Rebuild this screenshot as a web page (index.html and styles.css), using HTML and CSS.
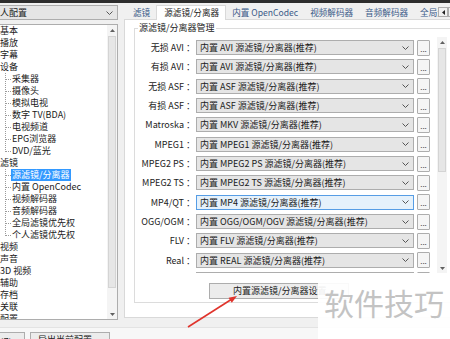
FILE: index.html
```html
<!DOCTYPE html>
<html lang="zh-CN">
<head>
    <meta charset="UTF-8">
    <meta name="viewport" content="width=device-width, initial-scale=1.0">
    <title>参数选项 - 源滤镜/分离器</title>
    <link rel="stylesheet" href="styles.css">
</head>
<body>
    <div class="window">
        <div class="topbar"></div>

        <div class="main">
            <div class="side">
                <div class="combo side-combo">
                    <span class="combo-text">个人配置</span>
                    <svg width="7" height="4" viewBox="0 0 7 4"><path d="M0.5 0.5 L3.5 3.5 L6.5 0.5" fill="none" stroke="#555" stroke-width="1"/></svg>
                </div>
                <div class="tree">
                    <div class="tree-list">
                        <div class="node">基本</div>
                        <div class="node">播放</div>
                        <div class="node">字幕</div>
                        <div class="node">设备</div>
                        <div class="kids">
                            <div class="kid">采集器</div>
                            <div class="kid">摄像头</div>
                            <div class="kid">模拟电视</div>
                            <div class="kid">数字 TV(BDA)</div>
                            <div class="kid">电视频道</div>
                            <div class="kid">EPG浏览器</div>
                            <div class="kid last">DVD/蓝光</div>
                        </div>
                        <div class="node">滤镜</div>
                        <div class="kids">
                            <div class="kid"><span class="sel">源滤镜/分离器</span></div>
                            <div class="kid">内置 OpenCodec</div>
                            <div class="kid">视频解码器</div>
                            <div class="kid">音频解码器</div>
                            <div class="kid">全局滤镜优先权</div>
                            <div class="kid last">个人滤镜优先权</div>
                        </div>
                        <div class="node">视频</div>
                        <div class="node">声音</div>
                        <div class="node">3D 视频</div>
                        <div class="node">辅助</div>
                        <div class="node">存档</div>
                        <div class="node">关联</div>
                        <div class="node">配置</div>
                    </div>
                    <div class="vbar">
                        <div class="vbar-btn"><svg width="5" height="3" viewBox="0 0 5 3"><path d="M0 3 L2.5 0 L5 3Z" fill="#606060"/></svg></div>
                        <div class="vbar-thumb"></div>
                        <div class="vbar-space"></div>
                        <div class="vbar-btn"><svg width="5" height="3" viewBox="0 0 5 3"><path d="M0 0 L2.5 3 L5 0Z" fill="#606060"/></svg></div>
                    </div>
                </div>
            </div>

            <div class="prefs">
                <div class="tabbar">
                    <div class="tabs">
                        <div class="tab">滤镜</div>
                        <div class="tab active">源滤镜/分离器</div>
                        <div class="tab">内置 OpenCodec</div>
                        <div class="tab">视频解码器</div>
                        <div class="tab">音频解码器</div>
                        <div class="tab">全局滤镜优先权</div>
                    </div>
                    <div class="tab-arrows">
                        <div class="tab-arrow"><svg width="3" height="5" viewBox="0 0 3 5"><path d="M3 0 L0 2.5 L3 5Z" fill="#222"/></svg></div>
                        <div class="tab-arrow"><svg width="3" height="5" viewBox="0 0 3 5"><path d="M0 0 L3 2.5 L0 5Z" fill="#222"/></svg></div>
                    </div>
                </div>

                <div class="pane">
                    <fieldset class="group">
                        <legend>源滤镜/分离器管理</legend>
                        <div class="scroller">
                            <div class="rows">
                                <div class="row"><span class="row-label">无损 AVI ：</span><div class="combo"><span class="combo-text">内置 AVI 源滤镜/分离器(推荐)</span><svg width="7" height="4" viewBox="0 0 7 4"><path d="M0.5 0.5 L3.5 3.5 L6.5 0.5" fill="none" stroke="#555" stroke-width="1"/></svg></div><div class="dots">...</div></div>
                                <div class="row"><span class="row-label">有损 AVI ：</span><div class="combo"><span class="combo-text">内置 AVI 源滤镜/分离器(推荐)</span><svg width="7" height="4" viewBox="0 0 7 4"><path d="M0.5 0.5 L3.5 3.5 L6.5 0.5" fill="none" stroke="#555" stroke-width="1"/></svg></div><div class="dots">...</div></div>
                                <div class="row"><span class="row-label">无损 ASF ：</span><div class="combo"><span class="combo-text">内置 ASF 源滤镜/分离器(推荐)</span><svg width="7" height="4" viewBox="0 0 7 4"><path d="M0.5 0.5 L3.5 3.5 L6.5 0.5" fill="none" stroke="#555" stroke-width="1"/></svg></div><div class="dots">...</div></div>
                                <div class="row"><span class="row-label">有损 ASF ：</span><div class="combo"><span class="combo-text">内置 ASF 源滤镜/分离器(推荐)</span><svg width="7" height="4" viewBox="0 0 7 4"><path d="M0.5 0.5 L3.5 3.5 L6.5 0.5" fill="none" stroke="#555" stroke-width="1"/></svg></div><div class="dots">...</div></div>
                                <div class="row"><span class="row-label">Matroska ：</span><div class="combo"><span class="combo-text">内置 MKV 源滤镜/分离器(推荐)</span><svg width="7" height="4" viewBox="0 0 7 4"><path d="M0.5 0.5 L3.5 3.5 L6.5 0.5" fill="none" stroke="#555" stroke-width="1"/></svg></div><div class="dots">...</div></div>
                                <div class="row"><span class="row-label">MPEG1 ：</span><div class="combo"><span class="combo-text">内置 MPEG1 源滤镜/分离器(推荐)</span><svg width="7" height="4" viewBox="0 0 7 4"><path d="M0.5 0.5 L3.5 3.5 L6.5 0.5" fill="none" stroke="#555" stroke-width="1"/></svg></div><div class="dots">...</div></div>
                                <div class="row"><span class="row-label">MPEG2 PS ：</span><div class="combo"><span class="combo-text">内置 MPEG2 PS 源滤镜/分离器(推荐)</span><svg width="7" height="4" viewBox="0 0 7 4"><path d="M0.5 0.5 L3.5 3.5 L6.5 0.5" fill="none" stroke="#555" stroke-width="1"/></svg></div><div class="dots">...</div></div>
                                <div class="row"><span class="row-label">MPEG2 TS ：</span><div class="combo"><span class="combo-text">内置 MPEG2 TS 源滤镜/分离器(推荐)</span><svg width="7" height="4" viewBox="0 0 7 4"><path d="M0.5 0.5 L3.5 3.5 L6.5 0.5" fill="none" stroke="#555" stroke-width="1"/></svg></div><div class="dots">...</div></div>
                                <div class="row"><span class="row-label">MP4/QT ：</span><div class="combo focus"><span class="combo-text">内置 MP4 源滤镜/分离器(推荐)</span><svg width="7" height="4" viewBox="0 0 7 4"><path d="M0.5 0.5 L3.5 3.5 L6.5 0.5" fill="none" stroke="#555" stroke-width="1"/></svg></div><div class="dots">...</div></div>
                                <div class="row"><span class="row-label">OGG/OGM ：</span><div class="combo"><span class="combo-text">内置 OGG/OGM/OGV 源滤镜/分离器(推荐)</span><svg width="7" height="4" viewBox="0 0 7 4"><path d="M0.5 0.5 L3.5 3.5 L6.5 0.5" fill="none" stroke="#555" stroke-width="1"/></svg></div><div class="dots">...</div></div>
                                <div class="row"><span class="row-label">FLV ：</span><div class="combo"><span class="combo-text">内置 FLV 源滤镜/分离器(推荐)</span><svg width="7" height="4" viewBox="0 0 7 4"><path d="M0.5 0.5 L3.5 3.5 L6.5 0.5" fill="none" stroke="#555" stroke-width="1"/></svg></div><div class="dots">...</div></div>
                                <div class="row"><span class="row-label">Real ：</span><div class="combo"><span class="combo-text">内置 REAL 源滤镜/分离器(推荐)</span><svg width="7" height="4" viewBox="0 0 7 4"><path d="M0.5 0.5 L3.5 3.5 L6.5 0.5" fill="none" stroke="#555" stroke-width="1"/></svg></div><div class="dots">...</div></div>
                                <div class="row"><span class="row-label">WAV ：</span><div class="combo"><span class="combo-text">内置 WAV 源滤镜/分离器(推荐)</span><svg width="7" height="4" viewBox="0 0 7 4"><path d="M0.5 0.5 L3.5 3.5 L6.5 0.5" fill="none" stroke="#555" stroke-width="1"/></svg></div><div class="dots">...</div></div>
                            </div>
                            <div class="vbar">
                                <div class="vbar-btn"><svg width="5" height="3" viewBox="0 0 5 3"><path d="M0 3 L2.5 0 L5 3Z" fill="#606060"/></svg></div>
                                <div class="vbar-thumb"></div>
                                <div class="vbar-space"></div>
                                <div class="vbar-btn"><svg width="5" height="3" viewBox="0 0 5 3"><path d="M0 0 L2.5 3 L5 0Z" fill="#606060"/></svg></div>
                            </div>
                        </div>
                        <button class="setup">内置源滤镜/分离器设置...</button>
                    </fieldset>
                </div>
            </div>
        </div>

        <div class="footer">
            <button class="btn-reset">初始化(Z)</button>
            <button class="btn-export">导出当前配置(C)...</button>
        </div>

        <div class="watermark">软件技巧</div>

        <svg class="arrow" width="450" height="339" viewBox="0 0 450 339">
            <line x1="188" y1="327" x2="232" y2="299" stroke="#e0342c" stroke-width="1.6"/>
            <polygon points="237,296 228.6,297.8 231.8,302.8" fill="#e0342c"/>
        </svg>
    </div>
</body>
</html>
```

FILE: styles.css
```css
* { box-sizing: border-box; }
body {
    margin: 0;
    background: #f0f0f0;
    font-family: "Noto Sans CJK SC", sans-serif;
    font-size: 9px;
    color: #1a1a1a;
}
.window {
    position: relative;
    width: 450px;
    height: 339px;
    overflow: hidden;
    background: #f0f0f0;
}
.topbar {
    height: 3px;
    background: #2d2d2d;
}
.main {
    display: flex;
    height: 317px;
}

/* left column */
.side {
    flex: none;
    width: 118px;
    padding-top: 2px;
}
.combo {
    display: flex;
    align-items: center;
    height: 15px;
    border: 1px solid #adadad;
    background: #e5e5e5;
    padding: 0 4px 0 3px;
    line-height: 13px;
    white-space: nowrap;
}
.combo-text {
    flex: 1;
    min-width: 0;
    overflow: hidden;
}
.combo svg { flex: none; }
.side-combo {
    margin-left: -10px;
    width: 128px;
    padding-left: 0;
}
.tree {
    display: flex;
    width: 120px;
    height: 296px;
    margin: 4px 0 0 -2px;
    border: 1px solid #adadad;
    background: #fff;
}
.tree-list {
    flex: 1;
    min-width: 0;
    padding-left: 1px;
    line-height: 12px;
    white-space: nowrap;
    overflow: hidden;
}
.node { height: 12px; }
.kid {
    height: 12px;
    padding-left: 12px;
    background:
        repeating-linear-gradient(90deg, #9a9a9a 0 1px, transparent 1px 2px) 6px 6px / 5px 1px no-repeat,
        repeating-linear-gradient(#9a9a9a 0 1px, transparent 1px 2px) 5px 0 / 1px 100% no-repeat;
}
.kid.last {
    background:
        repeating-linear-gradient(90deg, #9a9a9a 0 1px, transparent 1px 2px) 6px 6px / 5px 1px no-repeat,
        repeating-linear-gradient(#9a9a9a 0 1px, transparent 1px 2px) 5px 0 / 1px 7px no-repeat;
}
.sel {
    display: inline-block;
    height: 12px;
    margin-left: -1px;
    padding: 0 1px;
    background: #3399ff;
    color: #fff;
}

/* scrollbars */
.vbar {
    flex: none;
    width: 10px;
    display: flex;
    flex-direction: column;
    background: #f4f4f4;
}
.vbar-btn {
    flex: none;
    height: 10px;
    display: flex;
    align-items: center;
    justify-content: center;
}
.vbar-thumb {
    flex: none;
    margin: 1px 1px 0;
    background: #e6e6e6;
    border: 1px solid #d4d4d4;
}
.tree .vbar-thumb { height: 252px; }
.group .vbar-thumb { height: 124px; }
.vbar-space { flex: 1; }

/* right column */
.prefs {
    flex: none;
    width: 338px;
    margin-left: 6px;
    padding-top: 2px;
}
.tabbar {
    display: flex;
    height: 14px;
}
.tabs {
    position: relative;
    z-index: 1;
    flex: 1;
    min-width: 0;
    height: 15px;
    display: flex;
    padding-left: 3px;
    overflow: hidden;
    white-space: nowrap;
    font-size: 8.6px;
}
.tab {
    flex: none;
    height: 14px;
    line-height: 14px;
    padding: 0 6px;
    color: #3a5a88;
}
.tab.active {
    height: 15px;
    padding: 0 6px 0 7px;
    line-height: 13px;
    background: #fff;
    border: 1px solid #d9d9d9;
    border-bottom: 0;
    color: #222;
}
.tab-arrows {
    flex: none;
    display: flex;
    margin: 2px 4px 0 0;
}
.tab-arrow {
    width: 10px;
    height: 10px;
    display: flex;
    align-items: center;
    justify-content: center;
    border: 1px solid #adadad;
    background: #f0f0f0;
}
.pane {
    height: 299px;
    padding: 0 9px;
    border: 1px solid #d9d9d9;
    background: #fff;
}
.group {
    min-width: 0;
    margin: 3px 0 0;
    padding: 0 4px 3px 0;
    border: 1px solid #dcdcdc;
}
.group legend {
    margin-left: 3px;
    padding: 0 1px;
    line-height: 10px;
    color: #222;
}
.scroller {
    display: flex;
    height: 236px;
    margin-top: 4px;
    overflow: hidden;
}
.rows {
    flex: 1;
    display: flex;
    flex-direction: column;
    gap: 4.35px;
    padding-top: 3px;
}
.row {
    flex: none;
    display: flex;
    align-items: center;
    height: 15px;
}
.row-label {
    flex: none;
    width: 60px;
    text-align: right;
    white-space: nowrap;
    color: #222;
}
.row .combo {
    flex: none;
    width: 218px;
    margin-left: 1px;
}
.row .combo.focus {
    background: #e5f1fb;
    border-color: #569de5;
}
.dots {
    flex: none;
    width: 13px;
    height: 16px;
    margin-left: 3px;
    border: 1px solid #adadad;
    border-radius: 1px;
    background: #f5f5f5;
    text-align: center;
    line-height: 15px;
    font-size: 8px;
    color: #444;
}
.group .vbar { margin-left: 7px; }
.setup {
    display: block;
    width: 140px;
    height: 16px;
    margin: 10px 0 0 74px;
    padding: 0 0 0 23px;
    text-align: left;
    border: 1px solid #adadad;
    background: #ececec;
    font: inherit;
    line-height: 14px;
    color: #222;
}

/* bottom buttons */
.footer {
    display: flex;
    height: 20px;
    margin-top: 7px;
    padding-top: 4px;
    border-top: 1px solid #e3e3e3;
    background: #f7f7f7;
}
.footer button {
    flex: none;
    height: 18px;
    padding: 0;
    border: 1px solid #adadad;
    background: #ececec;
    font: inherit;
    color: #222;
}
.btn-reset {
    width: 65px;
    margin-left: -40px;
}
.btn-export {
    width: 80px;
    margin-left: 5px;
    text-align: left;
    padding-left: 7px !important;
}

/* overlays */
.watermark {
    position: absolute;
    left: 318px;
    top: 273px;
    width: 132px;
    height: 66px;
    display: flex;
    justify-content: center;
    padding-top: 9px;
    background: rgba(255, 255, 255, 0.93);
    font-family: "Noto Sans CJK SC", sans-serif;
    font-size: 30px;
    line-height: 40px;
    color: #c3c3c3;
}
.arrow {
    position: absolute;
    left: 0;
    top: 0;
}
```
